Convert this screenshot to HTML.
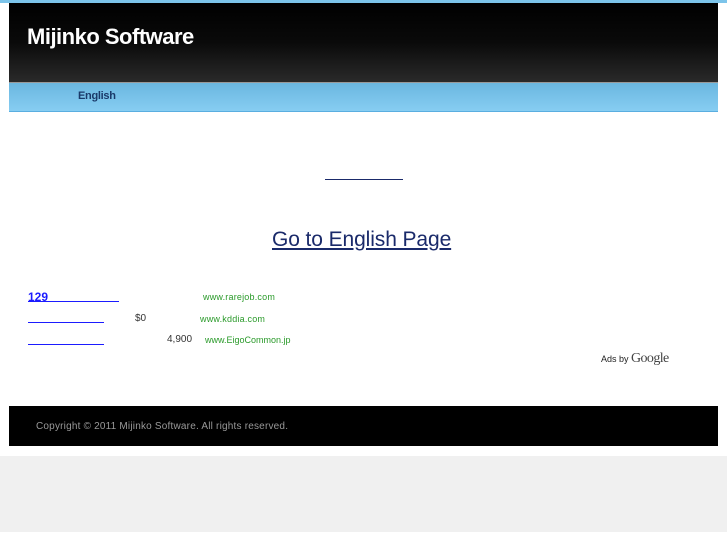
<!DOCTYPE html>
<html><head><meta charset="utf-8"><style>
body{margin:0;width:727px;height:545px;position:relative;background:#fff;font-family:"Liberation Sans",Arial,sans-serif;overflow:hidden}
.a{position:absolute}
</style></head><body>
<div class="a" style="left:0;top:0;width:727px;height:3px;background:#7cc4ea"></div>
<div class="a" style="left:9px;top:3px;width:709px;height:79px;background:linear-gradient(#000 0%,#0a0a0a 50%,#2a2a2a 100%)"></div>
<div class="a" style="left:27px;top:24px;color:#fff;font-size:22px;font-weight:bold;letter-spacing:-0.5px">Mijinko Software</div>
<div class="a" style="left:9px;top:82px;width:709px;height:1px;background:#999"></div>
<div class="a" style="left:9px;top:83px;width:709px;height:28px;background:linear-gradient(#6ab7e0,#86cdf2);border-bottom:1px solid #5aaee0"></div>
<div class="a" style="left:78px;top:90px;color:#1a3a6a;font-size:11px;font-weight:bold;letter-spacing:-0.3px">English</div>
<div class="a" style="left:325px;top:179px;width:78px;height:1px;background:#1a2a6a"></div>
<div class="a" style="left:272px;top:228px;font-size:21px;letter-spacing:-0.1px;color:#1a2a6a;text-decoration:underline">Go to English Page</div>
<div class="a" style="left:28px;top:290px;font-size:12px;font-weight:bold;color:#1b1bff">129</div>
<div class="a" style="left:28px;top:301px;width:91px;height:1px;background:#1b1bff"></div>
<div class="a" style="left:28px;top:322px;width:76px;height:1px;background:#1b1bff"></div>
<div class="a" style="left:28px;top:344px;width:76px;height:1px;background:#1b1bff"></div>
<div class="a" style="left:203px;top:292px;font-size:9px;letter-spacing:0.2px;color:#2a9a2a">www.rarejob.com</div>
<div class="a" style="left:135px;top:313px;font-size:10px;color:#333">$0</div>
<div class="a" style="left:200px;top:314px;font-size:9px;letter-spacing:0.2px;color:#2a9a2a">www.kddia.com</div>
<div class="a" style="left:167px;top:334px;font-size:10px;color:#333">4,900</div>
<div class="a" style="left:205px;top:335px;font-size:9px;color:#2a9a2a">www.EigoCommon.jp</div>
<div class="a" style="left:601px;top:351px;font-size:9px;color:#222">Ads by <span style="font-family:'Liberation Serif',serif;font-size:14px;letter-spacing:-0.6px;color:#444">Google</span></div>
<div class="a" style="left:9px;top:406px;width:709px;height:40px;background:#000"></div>
<div class="a" style="left:36px;top:421px;font-size:10px;letter-spacing:0.2px;color:#999">Copyright © 2011 Mijinko Software. All rights reserved.</div>
<div class="a" style="left:0;top:456px;width:727px;height:76px;background:#f0f0f0"></div>
</body></html>
